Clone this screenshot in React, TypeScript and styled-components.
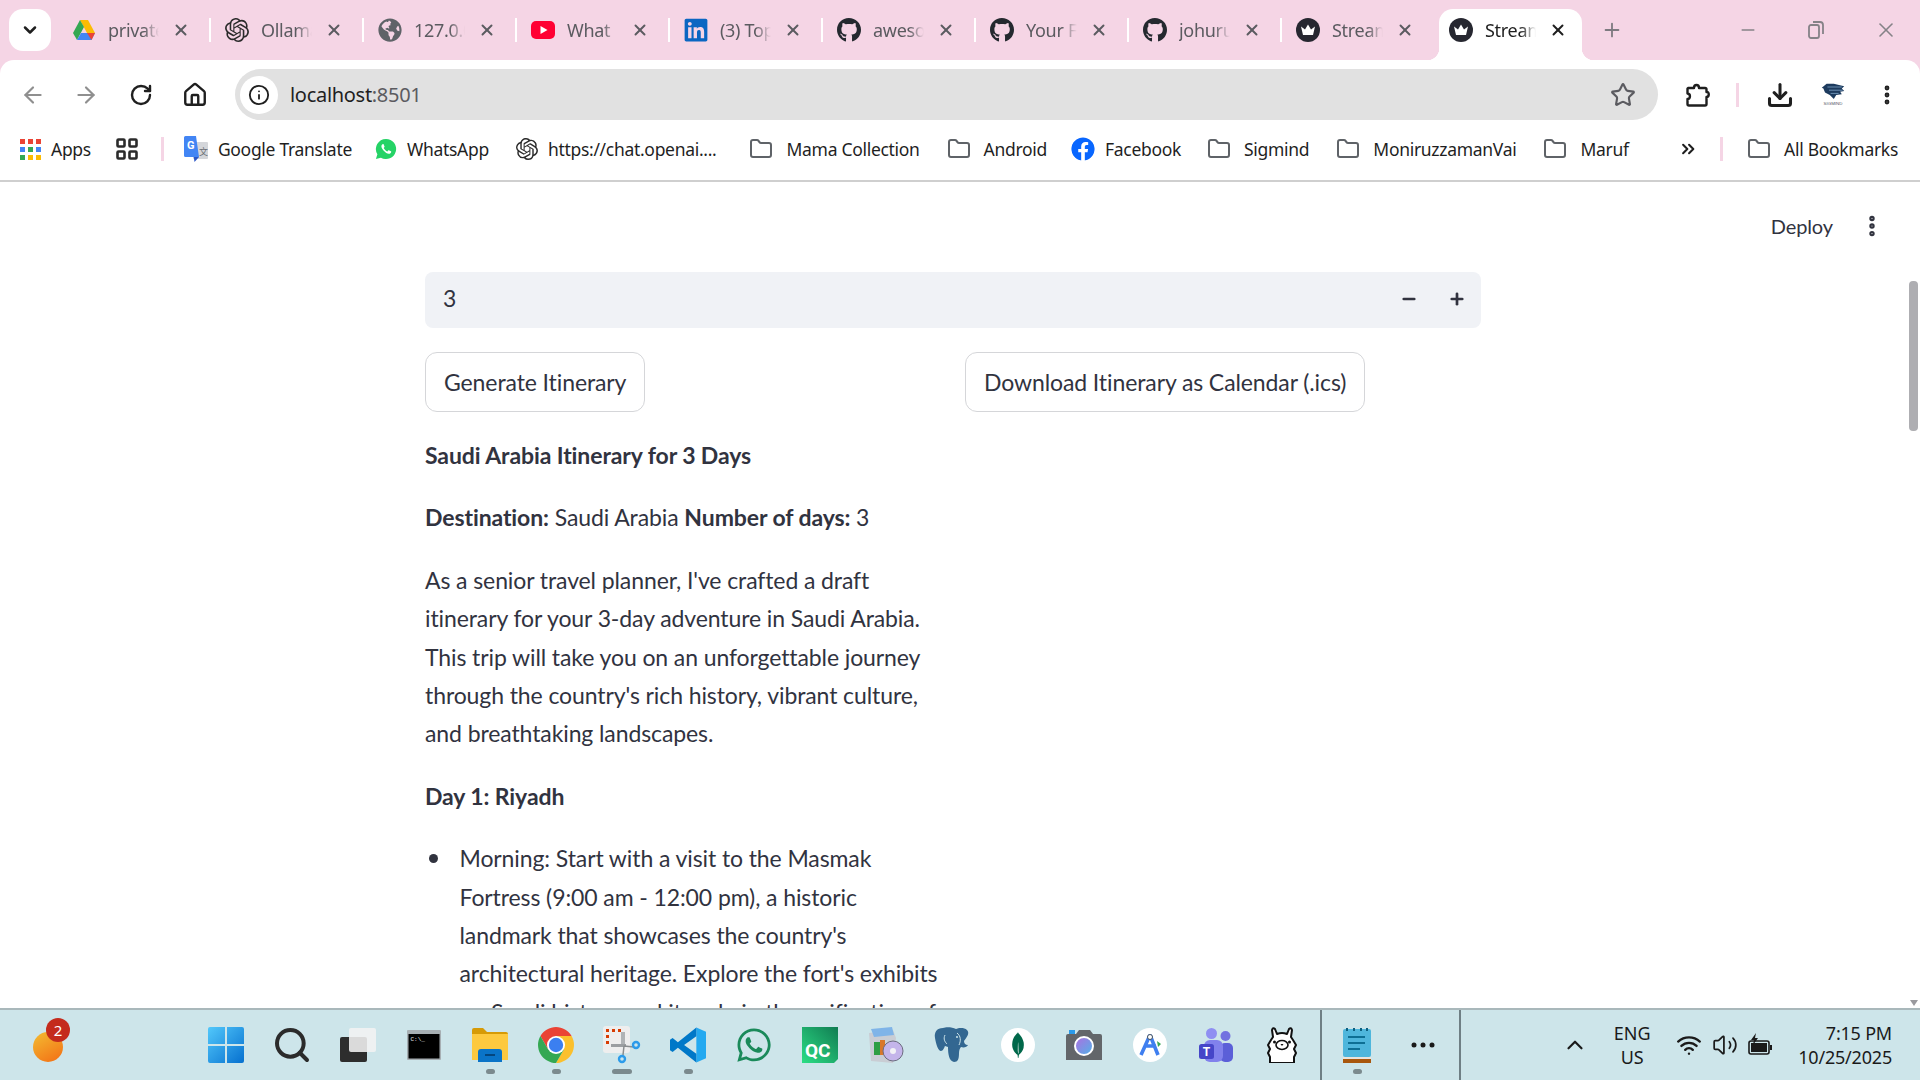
import React from 'react';
import styled, { createGlobalStyle } from 'styled-components';
import {
    ArrowLeft,
    ArrowRight,
    ChevronDown,
    ChevronUp,
    ChevronsRight,
    Download,
    EllipsisVertical,
    Folder,
    House,
    Info,
    Minus,
    Plus,
    RotateCw,
    Search,
    Star,
    Volume2,
    Wifi,
    X,
} from 'lucide-react';
import { FaFacebook, FaGithub, FaGlobeAmericas, FaLinkedin, FaWhatsapp } from 'react-icons/fa';
import { SiMongodb, SiOpenai } from 'react-icons/si';

const GlobalStyle = createGlobalStyle`
    html, body {
        margin: 0;
        height: 100%;
        overflow: hidden;
        background: #f5d5e5;
    }
    #root {
        height: 100%;
    }
`;

const uiFont = `"Noto Sans", "Liberation Sans", sans-serif`;
const pageFont = `Lato, "Noto Sans", sans-serif`;

const Screen = styled.div`
    display: flex;
    flex-direction: column;
    height: 1080px;
    width: 1920px;
    overflow: hidden;
    font-family: ${uiFont};
`;

/* tab strip */
const TabStrip = styled.div`
    display: flex;
    align-items: flex-start;
    height: 60px;
    padding: 9px 0 0 9px;
    box-sizing: border-box;
    background: #f5d5e5;
    flex-shrink: 0;
`;

const TabMenu = styled.div`
    display: flex;
    align-items: center;
    justify-content: center;
    width: 42px;
    height: 42px;
    margin-right: 7px;
    border-radius: 14px;
    background: #ffffff;
    color: #1f1f1f;
`;

const Tab = styled.div<{ $active?: boolean; $last?: boolean }>`
    position: relative;
    display: flex;
    align-items: center;
    gap: 12px;
    width: 153px;
    height: 42px;
    padding: 0 20px 0 14px;
    box-sizing: border-box;
    color: ${(p) => (p.$active ? '#1f1f1f' : '#5b5b60')};
    &::after {
        content: '';
        display: ${(p) => (p.$last ? 'none' : 'block')};
        position: absolute;
        right: 0;
        top: 9px;
        width: 2px;
        height: 24px;
        background: #ffffff;
    }
`;

const ActiveTabShape = styled.div`
    position: absolute;
    left: 4px;
    right: 6px;
    top: 0;
    height: 51px;
    background: #ffffff;
    border-radius: 14px 14px 0 0;
    &::before,
    &::after {
        content: '';
        position: absolute;
        bottom: 0;
        width: 12px;
        height: 12px;
    }
    &::before {
        left: -12px;
        background: radial-gradient(circle at 0 0, transparent 12px, #ffffff 12.5px);
    }
    &::after {
        right: -12px;
        background: radial-gradient(circle at 100% 0, transparent 12px, #ffffff 12.5px);
    }
`;

const TabIcon = styled.span`
    position: relative;
    display: flex;
    width: 24px;
    height: 24px;
    flex-shrink: 0;
    align-items: center;
    justify-content: center;
`;

const TabTitle = styled.span`
    position: relative;
    flex: 1;
    overflow: hidden;
    white-space: nowrap;
    font-size: 18px;
    letter-spacing: -0.3px;
    mask-image: linear-gradient(to right, #000 70%, transparent 100%);
`;

const TabClose = styled.span`
    position: relative;
    display: flex;
    justify-content: center;
    width: 20px;
    flex-shrink: 0;
`;

const NewTab = styled.div`
    display: flex;
    align-items: center;
    justify-content: center;
    width: 42px;
    height: 42px;
    margin-left: 3px;
    color: #7d7a80;
`;

const WindowControls = styled.div`
    display: flex;
    margin-left: auto;
    height: 42px;
    align-items: center;
    padding-right: 22px;
    gap: 48px;
    color: #858287;
`;

const RestoreIcon = styled.span`
    display: block;
    width: 20px;
    height: 20px;
`;

/* toolbar */
const Toolbar = styled.div`
    display: flex;
    align-items: center;
    height: 66px;
    padding: 9px 0 6px 9px;
    box-sizing: border-box;
    background: #ffffff;
    border-radius: 14px 14px 0 0;
    flex-shrink: 0;
`;

const NavButton = styled.div<{ $muted?: boolean; $w?: number; $ml?: number }>`
    display: flex;
    align-items: center;
    justify-content: center;
    flex-shrink: 0;
    width: ${(p) => p.$w ?? 54}px;
    margin-left: ${(p) => p.$ml ?? 0}px;
    color: ${(p) => (p.$muted ? '#8f8f8f' : '#1f1f1f')};
`;

const AddressBar = styled.div`
    display: flex;
    align-items: center;
    flex-shrink: 0;
    width: 1423px;
    height: 51px;
    margin-left: 12px;
    padding: 0 22px 0 5px;
    box-sizing: border-box;
    border-radius: 26px;
    background: #e1e1e1;
`;

const SiteInfo = styled.div`
    display: flex;
    align-items: center;
    justify-content: center;
    width: 38px;
    height: 38px;
    margin-right: 12px;
    border-radius: 50%;
    background: #ffffff;
    color: #1f1f1f;
`;

const Url = styled.div`
    flex: 1;
    font-size: 20px;
    letter-spacing: -0.3px;
    color: #1f1f1f;
    span {
        color: #5b5b60;
    }
`;

/* bookmarks */
const BookmarkBar = styled.div`
    display: flex;
    align-items: center;
    height: 56px;
    padding: 0 22px 8px 20px;
    box-sizing: border-box;
    background: #ffffff;
    border-bottom: 2px solid #cfcfcf;
    flex-shrink: 0;
    font-size: 17.5px;
    letter-spacing: -0.3px;
    color: #1f1f1f;
`;

const Bookmark = styled.div<{ $gap?: number }>`
    display: flex;
    align-items: center;
    gap: 10px;
    margin-right: ${(p) => p.$gap ?? 28}px;
    white-space: nowrap;
`;

const PinkSep = styled.div<{ $mr?: number }>`
    width: 3px;
    height: 24px;
    flex-shrink: 0;
    margin-right: ${(p) => p.$mr ?? 0}px;
    background: #f5d5e5;
`;

const Spacer = styled.div<{ $w: number }>`
    width: ${(p) => p.$w}px;
    flex-shrink: 0;
`;

const AppsGrid = styled.div`
    display: grid;
    grid-template-columns: repeat(3, 5px);
    gap: 3px;
`;

const AppsDot = styled.i<{ $c: string }>`
    display: block;
    width: 5px;
    height: 5px;
    background: ${(p) => p.$c};
`;

const BookmarkFolder = styled(Folder)`
    margin-right: 3px;
    color: #5f6368;
`;

/* streamlit page */
const Page = styled.div`
    position: relative;
    flex: 1;
    overflow: hidden;
    background: #ffffff;
    color: #31333f;
    font-family: ${pageFont};
    font-size: 23px;
    letter-spacing: -0.1px;
    line-height: 38.4px;
`;

const Header = styled.div`
    position: absolute;
    top: 25px;
    right: 35px;
    display: flex;
    align-items: center;
    gap: 26px;
    font-size: 20px;
`;

const Scrollbar = styled.div`
    position: absolute;
    top: 99px;
    right: 2px;
    width: 9px;
    height: 150px;
    border-radius: 4px;
    background: #aeaeb2;
`;

const ScrollArrow = styled.div`
    position: absolute;
    right: 2px;
    bottom: 2px;
    width: 0;
    height: 0;
    border-left: 4px solid transparent;
    border-right: 4px solid transparent;
    border-top: 6px solid #9a9a9e;
`;

const Main = styled.div`
    width: 1056px;
    margin-left: 425px;
    padding-top: 90px;
`;

const NumberInput = styled.div`
    display: flex;
    align-items: center;
    height: 56px;
    padding: 0 0 3px 18px;
    box-sizing: border-box;
    border-radius: 8px;
    background: #f0f2f6;
`;

const NumberValue = styled.div`
    flex: 1;
`;

const Stepper = styled.div`
    display: flex;
    align-items: center;
    justify-content: center;
    width: 48px;
`;

const Columns = styled.div`
    display: grid;
    grid-template-columns: 516px 516px;
    gap: 24px;
    margin-top: 24px;
`;

const Button = styled.div`
    display: inline-flex;
    align-items: center;
    height: 60px;
    padding: 0 18px;
    box-sizing: border-box;
    border: 1px solid #d5d6d9;
    border-radius: 12px;
    background: #ffffff;
`;

const Content = styled.div`
    width: 516px;
    margin-top: 24px;
`;

const Para = styled.p`
    margin: 0 0 24px;
`;

const List = styled.ul`
    margin: 0;
    padding-left: 34.5px;
    list-style: none;
`;

const ListItem = styled.li`
    position: relative;
    &::before {
        content: '';
        position: absolute;
        left: -31px;
        top: 15px;
        width: 9px;
        height: 9px;
        border-radius: 50%;
        background: #31333f;
    }
`;

/* taskbar */
const Taskbar = styled.div`
    display: flex;
    align-items: stretch;
    height: 72px;
    box-sizing: border-box;
    border-top: 2px solid #a9b8bb;
    background: #cde5ea;
    flex-shrink: 0;
    color: #1a1a1a;
`;

const Weather = styled.div`
    display: flex;
    align-items: center;
    width: 193px;
    padding-left: 33px;
    box-sizing: border-box;
`;

const WeatherIcon = styled.div`
    position: relative;
    width: 30px;
    height: 30px;
    border-radius: 50%;
    margin-top: 4px;
    background: linear-gradient(150deg, #f3bd32, #f36d14);
`;

const WeatherBadge = styled.div`
    position: absolute;
    top: -14px;
    left: 13px;
    width: 24px;
    height: 24px;
    border-radius: 50%;
    background: #c42b1c;
    color: #ffffff;
    font-size: 15px;
    line-height: 24px;
    text-align: center;
`;

const AppSlot = styled.div`
    position: relative;
    display: flex;
    align-items: center;
    justify-content: center;
    width: 66px;
    height: 70px;
`;

const RunDot = styled.div<{ $wide?: boolean }>`
    position: absolute;
    bottom: 6px;
    left: 50%;
    width: ${(p) => (p.$wide ? 20 : 9)}px;
    height: 5px;
    margin-left: ${(p) => (p.$wide ? -10 : -4.5)}px;
    border-radius: 3px;
    background: #7b8a8e;
`;

const TaskDivider = styled.div<{ $ml?: number; $mr?: number }>`
    width: 2px;
    margin-left: ${(p) => p.$ml ?? 0}px;
    margin-right: ${(p) => p.$mr ?? 0}px;
    background: #6f7f85;
`;

const Tray = styled.div`
    display: flex;
    align-items: center;
    margin-left: auto;
    padding-right: 28px;
    font-size: 18px;
`;

const LangStack = styled.div`
    display: flex;
    flex-direction: column;
    align-items: center;
    width: 50px;
    margin: 0 14px 0 19px;
    line-height: 24px;
`;

const TrayIcon = styled.div`
    display: flex;
    justify-content: center;
    width: 36px;
`;

const Clock = styled.div`
    display: flex;
    flex-direction: column;
    align-items: flex-end;
    margin-left: 19px;
    line-height: 24px;
    letter-spacing: -0.2px;
`;

/* drawings */
const DriveIcon = () => (
    <svg width="24" height="24" viewBox="0 0 24 24">
        <path d="M8 2h8l7 13h-8z" fill="#fbbc04" />
        <path d="M8 2 1 15l4 7 7-13z" fill="#34a853" />
        <path d="M5 22h14.500l3.500-7H9z" fill="#4285f4" />
        <path d="M15 15h8l-3.500 7z" fill="#ea4335" />
    </svg>
);

const YoutubeIcon = () => (
    <svg width="24" height="24" viewBox="0 0 24 24">
        <rect x="0" y="3" width="24" height="18" rx="5" fill="#ff0033" />
        <path d="M9.500 8v8l7-4z" fill="#ffffff" />
    </svg>
);

const StreamlitIcon = () => (
    <svg width="24" height="24" viewBox="0 0 24 24">
        <circle cx="12" cy="12" r="12" fill="#262730" />
        <path d="M5 8.500 9 11.500 12 6.500 15 11.500 19 8.500 17 17H7z" fill="#ffffff" />
    </svg>
);

const TabGroupsIcon = () => (
    <svg width="22" height="22" viewBox="0 0 22 22" fill="none" stroke="#2b2b2b" strokeWidth="2.600">
        <rect x="1.500" y="1.500" width="7" height="7" rx="1" />
        <rect x="13.500" y="1.500" width="7" height="7" rx="1" />
        <rect x="1.500" y="13.500" width="7" height="7" rx="1" />
        <rect x="13.500" y="13.500" width="7" height="7" rx="1" />
    </svg>
);

const TranslateIcon = () => (
    <svg width="24" height="26" viewBox="0 0 24 26">
        <rect x="9" y="6" width="15" height="17" rx="1" fill="#d4d6da" />
        <path d="M9 16 10.500 26 15 21z" fill="#2a56c6" />
        <path d="M1.500 0H12l3 21H1.500A1.500 1.500 0 0 1 0 19.500V1.500A1.500 1.500 0 0 1 1.500 0z" fill="#4285f4" />
        <text x="3" y="13" fontSize="11" fontWeight="700" fill="#ffffff" fontFamily="Roboto, sans-serif">G</text>
        <text x="15" y="19" fontSize="9" fill="#6b6e73" fontFamily="Noto Sans CJK SC, sans-serif">文</text>
    </svg>
);

const WhatsappBookmark = () => (
    <svg width="22" height="24" viewBox="0 0 24 24">
        <path d="M12 1a11 11 0 0 0-9.400 16.700L1 23l5.500-1.500A11 11 0 1 0 12 1z" fill="#25d366" />
        <path d="M8.500 6.500c-.8.500-1.700 1.600-1.500 3 .4 2.600 4.700 7.500 7.900 7.700 1.600.1 2.500-1 2.800-2 .1-.4 0-.6-.3-.8l-2.300-1.100c-.3-.1-.5 0-.7.200l-.9 1.100c-1.700-.6-3.300-2.100-4-3.800l.8-.9c.2-.2.200-.5.100-.7l-1-2.400c-.2-.4-.5-.4-.9-.3z" fill="#ffffff" />
    </svg>
);

const FacebookBookmark = styled(FaFacebook)`
    color: #0866ff;
    background: radial-gradient(circle, #ffffff 60%, transparent 62%);
    border-radius: 50%;
`;

const PuzzleIcon = () => (
    <svg width="26" height="26" viewBox="0 0 26 26" fill="none" stroke="#1f1f1f" strokeWidth="2.400" strokeLinejoin="round">
        <path d="M4 6h6c0-4 5-4 5 0h6a1.500 1.500 0 0 1 1.500 1.500V10c3-.5 3 5 0 5v7a1.500 1.500 0 0 1-1.500 1.500H5A1.500 1.500 0 0 1 3.500 22v-5c3 0 3.500-5 0-5.500V6.500z" />
    </svg>
);

const SigmindLogo = () => (
    <svg width="30" height="28" viewBox="0 0 30 28">
        <path d="M1 5 7 0h9l13 3-3 3 3 3-5 1 2 3-7 1-3 5-5-5-6-3-2-5z" fill="#1d3b5e" />
        <path d="M8 4h18M10 8h17M12 12h10" stroke="#7ea3c7" strokeWidth="1" />
        <text x="15" y="27" textAnchor="middle" fontSize="5.500" fill="#556" fontFamily="Liberation Sans, sans-serif">SIGMIND</text>
    </svg>
);

const WindowsIcon = () => (
    <svg width="36" height="36" viewBox="0 0 36 36">
        <defs>
            <linearGradient id="winBlue" x1="0" y1="0" x2="1" y2="1">
                <stop offset="0" stopColor="#52c8fb" />
                <stop offset="1" stopColor="#0670cf" />
            </linearGradient>
        </defs>
        <path d="M2 0h15v17H0V2a2 2 0 0 1 2-2zM19 0h15a2 2 0 0 1 2 2v15H19zM0 19h17v17H2a2 2 0 0 1-2-2zM19 19h17v15a2 2 0 0 1-2 2H19z" fill="url(#winBlue)" />
    </svg>
);

const TaskViewIcon = () => (
    <svg width="38" height="36" viewBox="0 0 38 36">
        <rect x="1" y="10" width="27" height="25" rx="2" fill="#2d2d2d" />
        <rect x="10" y="1" width="27" height="24" rx="2" fill="#f2f2f2" fillOpacity="0.88" />
    </svg>
);

const TerminalIcon = () => (
    <svg width="34" height="30" viewBox="0 0 34 30">
        <rect width="34" height="30" rx="1" fill="#a7afb3" />
        <rect x="1.500" y="4" width="31" height="24.500" fill="#000000" />
        <text x="3.500" y="11" fontSize="6" fill="#e8e8e8" fontFamily="Liberation Mono, monospace">C:\_</text>
    </svg>
);

const ExplorerIcon = () => (
    <svg width="36" height="34" viewBox="0 0 36 34">
        <path d="M0 2a2 2 0 0 1 2-2h9l4 4h19a2 2 0 0 1 2 2v3H0z" fill="#d69a06" />
        <path d="M0 6h36v26H0z" fill="#fdc93f" />
        <path d="M6 34V24a3 3 0 0 1 3-3h18a3 3 0 0 1 3 3v10z" fill="#0a74c8" />
        <rect x="13" y="26" width="10" height="2" fill="#04467e" />
    </svg>
);

const ChromeIcon = () => (
    <svg width="36" height="36" viewBox="4 4 40 40">
        <path d="M24 14H41.300A20 20 0 0 0 6.700 14L15.300 29Z" fill="#ea4335" />
        <path d="M41.300 14H24L32.700 29 24 44A20 20 0 0 0 41.300 14Z" fill="#fbc02d" />
        <path d="M24 44 32.700 29H15.300L6.700 14A20 20 0 0 0 24 44Z" fill="#34a853" />
        <circle cx="24" cy="24" r="10" fill="#ffffff" />
        <circle cx="24" cy="24" r="8" fill="#3b7ff0" />
    </svg>
);

const SnipIcon = () => (
    <svg width="38" height="38" viewBox="0 0 38 38">
        <rect x="0" y="0" width="27" height="27" rx="3" fill="#eeeeee" />
        <path d="M3 3h3v3H3zM9 3h3v3H9zM15 3h3v3h-3zM3 9h3v3H3zM3 15h3v3H3z" fill="#d83b01" />
        <path d="M18 6h4v15h-4z" fill="#b0b3b5" />
        <path d="M8 18h15v3H8z" fill="#9b9ea1" />
        <path d="M21 20 31 21M21 20l-1 9" stroke="#8a8d8f" strokeWidth="1.500" />
        <circle cx="33" cy="19" r="3" fill="none" stroke="#2b9bea" strokeWidth="2.400" />
        <circle cx="19" cy="33" r="3" fill="none" stroke="#2b9bea" strokeWidth="2.400" />
    </svg>
);

const VscodeIcon = () => (
    <svg width="36" height="36" viewBox="3 4 41 40">
        <path d="M33 4 44 9V39L33 44Z" fill="#24a9f0" />
        <path d="M33 4V14L19 24 33 34V44L12 27 6 32 3 30V18L6 16 12 21Z" fill="#0078c8" />
    </svg>
);

const QcIcon = () => (
    <svg width="36" height="36" viewBox="0 0 36 36">
        <defs>
            <linearGradient id="qcGreen" x1="1" y1="0" x2="0" y2="1">
                <stop offset="0" stopColor="#117c52" />
                <stop offset="1" stopColor="#2cde85" />
            </linearGradient>
        </defs>
        <path d="M0 0h36v32l-4 4H0z" fill="url(#qcGreen)" />
        <text x="3" y="30" fontSize="19" fontWeight="700" fill="#ffffff" fontFamily="Roboto, sans-serif">QC</text>
    </svg>
);

const InstallerIcon = () => (
    <svg width="36" height="36" viewBox="0 0 36 36">
        <path d="M1 6 25 3l3 8-3 25-22-2z" fill="#c9cdd4" />
        <path d="M3 2 24 0l2 8L6 10z" fill="#7fb4e8" />
        <rect x="6" y="15" width="6" height="13" fill="#2e9e43" />
        <rect x="12" y="13" width="5" height="15" fill="#d8772a" />
        <circle cx="25" cy="24" r="10" fill="#c4b5ea" stroke="#6c6c80" />
        <circle cx="25" cy="24" r="3" fill="#f2f2f6" />
    </svg>
);

const PostgresIcon = () => (
    <svg width="36" height="36" viewBox="0 0 36 36">
        <path
            d="M9 1C3 1 0 5 1 11C2 17 4 24 7 24C9 24 10 21 11 19L14 20C14 27 15 34 20 35C24 35 25 32 25 26C25 23 26 21 27 20C30 21 33 20 34 18C31 18 30 16 30 14C33 10 36 6 33 3C30 0 24 1 22 2C18 0 12 0 9 1Z"
            fill="#336791"
        />
        <path d="M11 8C9 12 11 15 13 17M23 6C27 9 27 14 25 18" fill="none" stroke="#cde5ea" strokeWidth="1" />
        <circle cx="23" cy="10" r="1" fill="#cde5ea" />
    </svg>
);

const WhiteDisc = styled.div`
    display: flex;
    align-items: center;
    justify-content: center;
    width: 34px;
    height: 34px;
    border-radius: 50%;
    background: #ffffff;
`;

const CameraIcon = () => (
    <svg width="36" height="30" viewBox="0 0 36 30">
        <defs>
            <linearGradient id="lensGrad" x1="0" y1="0" x2="1" y2="1">
                <stop offset="0" stopColor="#b06ee0" />
                <stop offset="1" stopColor="#4fb3e8" />
            </linearGradient>
        </defs>
        <rect x="3" y="0" width="6" height="4" fill="#2b9bea" />
        <path d="M2 4h8l3-4h11l3 4h7a2 2 0 0 1 2 2v24H0V6a2 2 0 0 1 2-2z" fill="#63666a" />
        <circle cx="18" cy="16" r="9" fill="url(#lensGrad)" stroke="#ffffff" strokeWidth="2" />
    </svg>
);

const AstudioIcon = () => (
    <svg width="34" height="34" viewBox="0 0 34 34">
        <circle cx="17" cy="17" r="17" fill="#ffffff" />
        <path d="M17 7 8 27M17 7l8 20M11 18h12" fill="none" stroke="#3f7ff0" strokeWidth="3.600" />
        <circle cx="17" cy="9" r="2.500" fill="#ffffff" stroke="#44505c" />
        <path d="M24 13l4 3-3 3z" fill="#3aa757" />
    </svg>
);

const TeamsIcon = () => (
    <svg width="34" height="34" viewBox="0 0 34 34">
        <circle cx="12.500" cy="5.500" r="5.500" fill="#8f8ff2" />
        <circle cx="26.500" cy="8" r="5" fill="#7272e0" />
        <rect x="21" y="15" width="13" height="19" rx="5" fill="#5b5fd8" />
        <rect x="5" y="12" width="19" height="22" rx="6" fill="#8181ec" />
        <rect x="0" y="16" width="15" height="15" rx="2.500" fill="#4646c8" />
        <text x="7.500" y="28" textAnchor="middle" fontSize="12" fontWeight="700" fill="#ffffff" fontFamily="Roboto, sans-serif">T</text>
    </svg>
);

const LlamaIcon = () => (
    <svg width="30" height="36" viewBox="0 0 30 36">
        <path
            d="M3 36V30L1 26 3 22 1 18 4 13 6 10 5 3Q6 0 8 2L10 7Q15 5 20 7L22 2Q24 0 25 3L24 10 26 13 29 18 27 22 29 26 27 30V36Z"
            fill="#ffffff"
            stroke="#111111"
            strokeWidth="2"
            strokeLinejoin="round"
        />
        <ellipse cx="15" cy="18" rx="6" ry="4.500" fill="none" stroke="#111111" strokeWidth="1.600" />
        <circle cx="7.500" cy="15" r="1.500" fill="#111111" />
        <circle cx="22.500" cy="15" r="1.500" fill="#111111" />
        <path d="M13.500 17h3l-1.500 2z" fill="#111111" />
    </svg>
);

const NotepadIcon = () => (
    <svg width="28" height="36" viewBox="0 0 28 36">
        <rect x="0" y="2" width="28" height="28" rx="2" fill="#4eb6dc" />
        <path d="M4 1v3M11 1v3M18 1v3M24 1v3" stroke="#0d5f80" strokeWidth="2" />
        <path d="M5 10h17M5 16h17M5 22h12" stroke="#0d6f94" strokeWidth="2" />
        <rect x="0" y="30" width="28" height="2" fill="#e8e4dd" />
        <rect x="0" y="32" width="28" height="4" fill="#a8570e" />
    </svg>
);

const MoreDots = () => (
    <svg width="24" height="6" viewBox="0 0 24 6" fill="#1a1a1a">
        <circle cx="3" cy="3" r="2.500" />
        <circle cx="12" cy="3" r="2.500" />
        <circle cx="21" cy="3" r="2.500" />
    </svg>
);

const BatteryIcon = () => (
    <svg width="26" height="26" viewBox="0 0 26 26">
        <rect x="1" y="9" width="20" height="13" rx="2" fill="none" stroke="#1a1a1a" strokeWidth="1.600" />
        <rect x="3" y="11" width="16" height="9" fill="#1a1a1a" />
        <rect x="22" y="13" width="2" height="5" fill="#1a1a1a" />
        <path d="M8 1 3 8h3l-1 5 5-7H7z" fill="#1a1a1a" />
    </svg>
);

const tabs = [
    { title: 'private', icon: <DriveIcon /> },
    { title: 'Ollama', icon: <SiOpenai size={24} color="#2b2b2b" /> },
    { title: '127.0.0', icon: <FaGlobeAmericas size={24} color="#5f6368" /> },
    { title: 'What', icon: <YoutubeIcon /> },
    { title: '(3) Top', icon: <FaLinkedin size={26} color="#0a66c2" /> },
    { title: 'awesome', icon: <FaGithub size={26} color="#24292f" /> },
    { title: 'Your Fi', icon: <FaGithub size={26} color="#24292f" /> },
    { title: 'johuru', icon: <FaGithub size={26} color="#24292f" /> },
    { title: 'Stream', icon: <StreamlitIcon /> },
    { title: 'Stream', icon: <StreamlitIcon />, active: true },
];

const appDots = ['#ea4335', '#ea4335', '#ea4335', '#4285f4', '#34a853', '#4285f4', '#34a853', '#fbbc05', '#fbbc05'];

const FolderIcon = () => <BookmarkFolder size={24} strokeWidth={2} />;

const bookmarks: { label: string; icon: React.ReactNode; gap: number }[] = [
    { label: 'Google Translate', icon: <TranslateIcon />, gap: 23 },
    { label: 'WhatsApp', icon: <WhatsappBookmark />, gap: 27 },
    { label: 'https://chat.openai....', icon: <SiOpenai size={22} color="#2b2b2b" />, gap: 33 },
    { label: 'Mama Collection', icon: <FolderIcon />, gap: 27 },
    { label: 'Android', icon: <FolderIcon />, gap: 24 },
    { label: 'Facebook', icon: <FacebookBookmark size={24} />, gap: 26 },
    { label: 'Sigmind', icon: <FolderIcon />, gap: 27 },
    { label: 'MoniruzzamanVai', icon: <FolderIcon />, gap: 27 },
    { label: 'Maruf', icon: <FolderIcon />, gap: 49 },
];

const apps: { icon: React.ReactNode; run?: 'dot' | 'wide' }[] = [
    { icon: <WindowsIcon /> },
    { icon: <Search size={40} color="#2b2b2b" strokeWidth={2.400} /> },
    { icon: <TaskViewIcon /> },
    { icon: <TerminalIcon /> },
    { icon: <ExplorerIcon />, run: 'dot' },
    { icon: <ChromeIcon />, run: 'dot' },
    { icon: <SnipIcon />, run: 'wide' },
    { icon: <VscodeIcon />, run: 'dot' },
    { icon: <FaWhatsapp size={38} color="#1a8a5a" /> },
    { icon: <QcIcon /> },
    { icon: <InstallerIcon /> },
    { icon: <PostgresIcon /> },
    { icon: <WhiteDisc><SiMongodb size={26} color="#00684a" /></WhiteDisc> },
    { icon: <CameraIcon /> },
    { icon: <AstudioIcon /> },
    { icon: <TeamsIcon /> },
    { icon: <LlamaIcon /> },
];

export default function App(): React.ReactElement {
    return (
        <Screen>
            <GlobalStyle />
            <TabStrip>
                <TabMenu>
                    <ChevronDown size={20} strokeWidth={3} />
                </TabMenu>
                {tabs.map((tab, i) => (
                    <Tab key={i} $active={tab.active} $last={tab.active || i === tabs.length - 2}>
                        {tab.active && <ActiveTabShape />}
                        <TabIcon>{tab.icon}</TabIcon>
                        <TabTitle>{tab.title}</TabTitle>
                        <TabClose>
                            <X size={18} strokeWidth={2.600} />
                        </TabClose>
                    </Tab>
                ))}
                <NewTab>
                    <Plus size={22} strokeWidth={2} />
                </NewTab>
                <WindowControls>
                    <Minus size={20} strokeWidth={1.800} />
                    <RestoreIcon>
                        <svg width="20" height="20" viewBox="0 0 20 20" fill="none" stroke="currentColor" strokeWidth="1.800">
                            <rect x="3" y="5" width="10" height="13" rx="2" />
                            <path d="M7 2h7a3 3 0 0 1 3 3v9" />
                        </svg>
                    </RestoreIcon>
                    <X size={24} strokeWidth={1.600} />
                </WindowControls>
            </TabStrip>

            <Toolbar>
                <NavButton $muted $w={48}>
                    <ArrowLeft size={26} strokeWidth={2} />
                </NavButton>
                <NavButton $muted $w={58}>
                    <ArrowRight size={26} strokeWidth={2} />
                </NavButton>
                <NavButton $w={52}>
                    <RotateCw size={24} strokeWidth={2.400} />
                </NavButton>
                <NavButton $w={56}>
                    <House size={26} strokeWidth={2.200} />
                </NavButton>
                <AddressBar>
                    <SiteInfo>
                        <Info size={22} strokeWidth={2} />
                    </SiteInfo>
                    <Url>
                        localhost<span>:8501</span>
                    </Url>
                    <Star size={26} color="#5b5b60" strokeWidth={2} />
                </AddressBar>
                <NavButton $w={78}>
                    <PuzzleIcon />
                </NavButton>
                <PinkSep />
                <NavButton $w={82}>
                    <Download size={28} strokeWidth={2.600} />
                </NavButton>
                <NavButton $w={24}>
                    <SigmindLogo />
                </NavButton>
                <NavButton $w={24} $ml={30}>
                    <EllipsisVertical size={28} strokeWidth={2.800} />
                </NavButton>
            </Toolbar>

            <BookmarkBar>
                <Bookmark $gap={25}>
                    <AppsGrid>
                        {appDots.map((c, i) => (
                            <AppsDot key={i} $c={c} />
                        ))}
                    </AppsGrid>
                    Apps
                </Bookmark>
                <Bookmark $gap={23}>
                    <TabGroupsIcon />
                </Bookmark>
                <PinkSep $mr={20} />
                {bookmarks.map((b) => (
                    <Bookmark key={b.label} $gap={b.gap}>
                        {b.icon}
                        {b.label}
                    </Bookmark>
                ))}
                <ChevronsRight size={22} color="#1f1f1f" strokeWidth={2.400} />
                <Spacer $w={22} />
                <PinkSep $mr={24} />
                <Bookmark $gap={0}>
                    <FolderIcon />
                    All Bookmarks
                </Bookmark>
            </BookmarkBar>

            <Page>
                <Header>
                    Deploy
                    <EllipsisVertical size={26} strokeWidth={3} />
                </Header>
                <Scrollbar />
                <ScrollArrow />
                <Main>
                    <NumberInput>
                        <NumberValue>3</NumberValue>
                        <Stepper>
                            <Minus size={18} strokeWidth={3.600} />
                        </Stepper>
                        <Stepper>
                            <Plus size={18} strokeWidth={3.600} />
                        </Stepper>
                    </NumberInput>
                    <Columns>
                        <div>
                            <Button>Generate Itinerary</Button>
                        </div>
                        <div>
                            <Button>Download Itinerary as Calendar (.ics)</Button>
                        </div>
                    </Columns>
                    <Content>
                        <Para>
                            <strong>Saudi Arabia Itinerary for 3 Days</strong>
                        </Para>
                        <Para>
                            <strong>Destination:</strong> Saudi Arabia <strong>Number of days:</strong> 3
                        </Para>
                        <Para>
                            As a senior travel planner, I've crafted a draft itinerary for your 3-day adventure in
                            Saudi Arabia. This trip will take you on an unforgettable journey through the country's
                            rich history, vibrant culture, and breathtaking landscapes.
                        </Para>
                        <Para>
                            <strong>Day 1: Riyadh</strong>
                        </Para>
                        <List>
                            <ListItem>
                                Morning: Start with a visit to the Masmak Fortress (9:00 am - 12:00 pm), a historic
                                landmark that showcases the country's architectural heritage. Explore the fort's
                                exhibits on Saudi history and its role in the unification of
                            </ListItem>
                        </List>
                    </Content>
                </Main>
            </Page>

            <Taskbar>
                <Weather>
                    <WeatherIcon>
                        <WeatherBadge>2</WeatherBadge>
                    </WeatherIcon>
                </Weather>
                {apps.map((app, i) => (
                    <AppSlot key={i}>
                        {app.icon}
                        {app.run && <RunDot $wide={app.run === 'wide'} />}
                    </AppSlot>
                ))}
                <TaskDivider $ml={5} $mr={2} />
                <AppSlot>
                    <NotepadIcon />
                    <RunDot />
                </AppSlot>
                <AppSlot>
                    <MoreDots />
                </AppSlot>
                <TaskDivider $ml={3} />
                <Tray>
                    <ChevronUp size={26} strokeWidth={2} />
                    <LangStack>
                        <span>ENG</span>
                        <span>US</span>
                    </LangStack>
                    <TrayIcon>
                        <Wifi size={26} strokeWidth={2.200} />
                    </TrayIcon>
                    <TrayIcon>
                        <Volume2 size={26} strokeWidth={1.600} />
                    </TrayIcon>
                    <TrayIcon>
                        <BatteryIcon />
                    </TrayIcon>
                    <Clock>
                        <span>7:15 PM</span>
                        <span>10/25/2025</span>
                    </Clock>
                </Tray>
            </Taskbar>
        </Screen>
    );
}
